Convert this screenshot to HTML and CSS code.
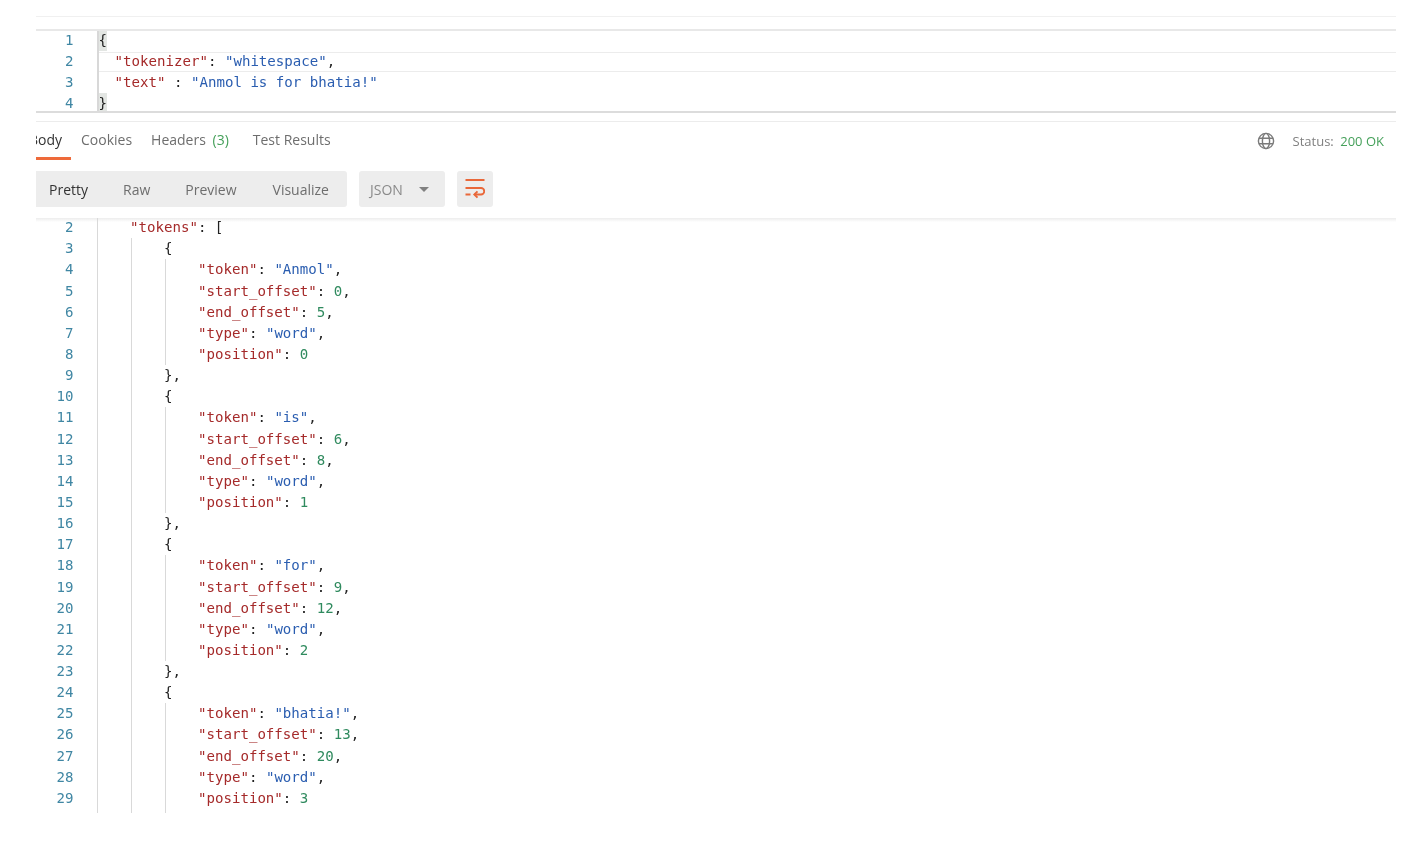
FILE: index.html
```html
<!DOCTYPE html>
<html lang="en">
<head>
<meta charset="utf-8">
<title>Postman response</title>
<link rel="stylesheet" href="styles.css">
</head>
<body>
<main class="app">
  <section class="editor">
    <div class="eline"><span class="num">1</span><div class="ecode first"><span class="brace">{</span></div></div>
    <div class="eline"><span class="num">2</span><div class="ecode mid active"><span class="k">"tokenizer"</span><span class="p">: </span><span class="s">"whitespace"</span><span class="p">,</span></div></div>
    <div class="eline"><span class="num">3</span><div class="ecode mid"><span class="k">"text"</span><span class="p"> : </span><span class="s">"Anmol is for bhatia!"</span></div></div>
    <div class="eline"><span class="num">4</span><div class="ecode first"><span class="brace">}</span></div></div>
  </section>

  <nav class="tabs">
    <div class="tabstrip">
      <a class="tab active">Body</a>
      <a class="tab">Cookies</a>
      <a class="tab">Headers <span class="count">(3)</span></a>
      <a class="tab">Test Results</a>
    </div>
    <div class="status">
      <svg class="globe" width="18" height="18" viewBox="0 0 18 18" fill="none" stroke="#7b7b7b" stroke-width="1.4"><circle cx="9" cy="9" r="7.6"/><ellipse cx="9" cy="9" rx="3.6" ry="7.6"/><path d="M2 6.200h14M2 11.800h14"/></svg>
      <span class="label">Status:</span><span class="ok">200 OK</span>
    </div>
  </nav>

  <div class="toolbar">
    <div class="segments">
      <span class="seg on">Pretty</span><span class="seg">Raw</span><span class="seg">Preview</span><span class="seg">Visualize</span>
    </div>
    <div class="select"><span>JSON</span><i class="caret"></i></div>
    <div class="wrapbtn">
      <svg width="20" height="20" viewBox="0 0 20 20" fill="none" stroke="#e9683a" stroke-width="1.9"><path d="M0.500 1h19M0.500 9h15.500a3.200 3.200 0 0 1 0 6.500H9.500M0.500 15.500h5"/><path d="M12.500 12.300L9.300 15.500l3.200 3.200"/></svg>
    </div>
  </div>

  <section class="response">
<div class="line"><span class="num">2</span><div class="rcode"><i class="g"></i><span class="k">"tokens"</span><span class="p">: [</span></div></div>
<div class="line"><span class="num">3</span><div class="rcode"><i class="g"></i><i class="g"></i><span class="p">{</span></div></div>
<div class="line"><span class="num">4</span><div class="rcode"><i class="g"></i><i class="g"></i><i class="g"></i><span class="k">"token"</span><span class="p">: </span><span class="s">"Anmol"</span><span class="p">,</span></div></div>
<div class="line"><span class="num">5</span><div class="rcode"><i class="g"></i><i class="g"></i><i class="g"></i><span class="k">"start_offset"</span><span class="p">: </span><span class="v">0</span><span class="p">,</span></div></div>
<div class="line"><span class="num">6</span><div class="rcode"><i class="g"></i><i class="g"></i><i class="g"></i><span class="k">"end_offset"</span><span class="p">: </span><span class="v">5</span><span class="p">,</span></div></div>
<div class="line"><span class="num">7</span><div class="rcode"><i class="g"></i><i class="g"></i><i class="g"></i><span class="k">"type"</span><span class="p">: </span><span class="s">"word"</span><span class="p">,</span></div></div>
<div class="line"><span class="num">8</span><div class="rcode"><i class="g"></i><i class="g"></i><i class="g"></i><span class="k">"position"</span><span class="p">: </span><span class="v">0</span></div></div>
<div class="line"><span class="num">9</span><div class="rcode"><i class="g"></i><i class="g"></i><span class="p">},</span></div></div>
<div class="line"><span class="num">10</span><div class="rcode"><i class="g"></i><i class="g"></i><span class="p">{</span></div></div>
<div class="line"><span class="num">11</span><div class="rcode"><i class="g"></i><i class="g"></i><i class="g"></i><span class="k">"token"</span><span class="p">: </span><span class="s">"is"</span><span class="p">,</span></div></div>
<div class="line"><span class="num">12</span><div class="rcode"><i class="g"></i><i class="g"></i><i class="g"></i><span class="k">"start_offset"</span><span class="p">: </span><span class="v">6</span><span class="p">,</span></div></div>
<div class="line"><span class="num">13</span><div class="rcode"><i class="g"></i><i class="g"></i><i class="g"></i><span class="k">"end_offset"</span><span class="p">: </span><span class="v">8</span><span class="p">,</span></div></div>
<div class="line"><span class="num">14</span><div class="rcode"><i class="g"></i><i class="g"></i><i class="g"></i><span class="k">"type"</span><span class="p">: </span><span class="s">"word"</span><span class="p">,</span></div></div>
<div class="line"><span class="num">15</span><div class="rcode"><i class="g"></i><i class="g"></i><i class="g"></i><span class="k">"position"</span><span class="p">: </span><span class="v">1</span></div></div>
<div class="line"><span class="num">16</span><div class="rcode"><i class="g"></i><i class="g"></i><span class="p">},</span></div></div>
<div class="line"><span class="num">17</span><div class="rcode"><i class="g"></i><i class="g"></i><span class="p">{</span></div></div>
<div class="line"><span class="num">18</span><div class="rcode"><i class="g"></i><i class="g"></i><i class="g"></i><span class="k">"token"</span><span class="p">: </span><span class="s">"for"</span><span class="p">,</span></div></div>
<div class="line"><span class="num">19</span><div class="rcode"><i class="g"></i><i class="g"></i><i class="g"></i><span class="k">"start_offset"</span><span class="p">: </span><span class="v">9</span><span class="p">,</span></div></div>
<div class="line"><span class="num">20</span><div class="rcode"><i class="g"></i><i class="g"></i><i class="g"></i><span class="k">"end_offset"</span><span class="p">: </span><span class="v">12</span><span class="p">,</span></div></div>
<div class="line"><span class="num">21</span><div class="rcode"><i class="g"></i><i class="g"></i><i class="g"></i><span class="k">"type"</span><span class="p">: </span><span class="s">"word"</span><span class="p">,</span></div></div>
<div class="line"><span class="num">22</span><div class="rcode"><i class="g"></i><i class="g"></i><i class="g"></i><span class="k">"position"</span><span class="p">: </span><span class="v">2</span></div></div>
<div class="line"><span class="num">23</span><div class="rcode"><i class="g"></i><i class="g"></i><span class="p">},</span></div></div>
<div class="line"><span class="num">24</span><div class="rcode"><i class="g"></i><i class="g"></i><span class="p">{</span></div></div>
<div class="line"><span class="num">25</span><div class="rcode"><i class="g"></i><i class="g"></i><i class="g"></i><span class="k">"token"</span><span class="p">: </span><span class="s">"bhatia!"</span><span class="p">,</span></div></div>
<div class="line"><span class="num">26</span><div class="rcode"><i class="g"></i><i class="g"></i><i class="g"></i><span class="k">"start_offset"</span><span class="p">: </span><span class="v">13</span><span class="p">,</span></div></div>
<div class="line"><span class="num">27</span><div class="rcode"><i class="g"></i><i class="g"></i><i class="g"></i><span class="k">"end_offset"</span><span class="p">: </span><span class="v">20</span><span class="p">,</span></div></div>
<div class="line"><span class="num">28</span><div class="rcode"><i class="g"></i><i class="g"></i><i class="g"></i><span class="k">"type"</span><span class="p">: </span><span class="s">"word"</span><span class="p">,</span></div></div>
<div class="line"><span class="num">29</span><div class="rcode"><i class="g"></i><i class="g"></i><i class="g"></i><span class="k">"position"</span><span class="p">: </span><span class="v">3</span></div></div>
<div class="line"><span class="num"></span><div class="rcode"><i class="g"></i><i class="g"></i><i class="g"></i></div></div>
  </section>
</main>
</body>
</html>
```

FILE: styles.css
```css
* { box-sizing: border-box; }

html, body {
  margin: 0;
  height: 860px;
  background: #fff;
  overflow: hidden;
}

.app {
  width: 1360px;
  margin: 16px 0 0 36px;
  padding-top: 2px;
  border-top: 1px solid #f0f0f0;
  font-family: "Open Sans", "Liberation Sans", sans-serif;
  filter: blur(0.6px);
}

/* request editor */
.editor {
  margin-top: 10px;
  height: 84px;
  border-top: 2px solid #e8e8e8;
  border-bottom: 2px solid #dcdcdc;
  overflow: hidden;
}

.eline, .line {
  display: flex;
  font-family: "DejaVu Sans Mono", "Liberation Mono", monospace;
  font-size: 14.1px;
}

.eline { height: 21px; line-height: 21px; }
.eline:first-child { height: 19.800px; line-height: 19.800px; }
.line { height: 21.150px; line-height: 21.150px; }
.line:first-child { margin-top: -0.900px; }

.num {
  flex: none;
  width: 37.600px;
  text-align: right;
  color: #3f86a3;
}

.ecode {
  flex: 1;
  margin-left: 23px;
  padding-left: 16px;
  border-left: 2px solid #d8d8d8;
  white-space: pre;
}

.ecode.first { padding-left: 0; }

.ecode.active {
  background:
    linear-gradient(#ececec, #ececec) 0 1px / 100% 1px no-repeat,
    linear-gradient(#ececec, #ececec) 0 20px / 100% 1px no-repeat;
}

.brace {
  display: inline-block;
  width: 8px;
  background: #e3e6e3;
  color: #222;
}

.k { color: #a52a2a; }
.s { color: #2a5db0; }
.v { color: #2f8a5e; }
.p { color: #222; }

/* response tabs */
.tabs {
  display: flex;
  align-items: flex-start;
  justify-content: space-between;
  height: 39px;
  margin-top: 8px;
  border-top: 1px solid #ececec;
}

.tabstrip {
  display: flex;
  gap: 19px;
  margin-left: -7px;
  clip-path: inset(0 0 0 7px);
  font-size: 14px;
  color: #6e6e6e;
}

.tab {
  height: 38px;
  padding-top: 8px;
  line-height: 20px;
  white-space: nowrap;
}

.tab.active {
  color: #333;
  width: 42px;
  margin-right: -9px;
  border-bottom: 3px solid #ee6a3a;
}

.count { color: #45a05a; margin-left: 3px; }

.tab:last-child { margin-left: 5px; }

.status {
  display: flex;
  align-items: center;
  height: 37px;
  padding-right: 12px;
  font-size: 13px;
}

.globe { margin-right: 18px; }
.label { color: #808080; margin-right: 6.500px; }
.ok { color: #45a05a; }

/* toolbar */
.toolbar {
  display: flex;
  gap: 12px;
  height: 36px;
  margin-top: 11px;
  font-size: 14px;
}

.segments {
  display: flex;
  align-items: center;
  width: 311px;
  padding-left: 13px;
  gap: 35px;
  background: #ededed;
  border-radius: 0 3px 3px 0;
  color: #6e6e6e;
}

.seg.on { color: #333; }
.seg:last-child { margin-left: 1px; }

.select {
  display: flex;
  align-items: center;
  gap: 16px;
  width: 86px;
  padding-left: 11px;
  background: #ededed;
  border-radius: 3px;
  color: #8a8a8a;
}

.caret {
  width: 0;
  height: 0;
  border-left: 5px solid transparent;
  border-right: 5px solid transparent;
  border-top: 5px solid #808080;
}

.wrapbtn {
  display: flex;
  align-items: center;
  justify-content: center;
  width: 36px;
  background: #ededed;
  border-radius: 3px;
}

/* response body */
.response {
  height: 595px;
  margin-top: 11px;
  background: linear-gradient(#ededed, #fff) 0 0 / 100% 4px no-repeat;
  overflow: hidden;
}

.rcode {
  flex: 1;
  margin-left: 23.400px;
  white-space: pre;
  display: flex;
}

.g {
  flex: none;
  width: 34px;
  height: 100%;
  border-left: 1px solid #d9d9d9;
}

.g + span { margin-left: -1px; }
```
